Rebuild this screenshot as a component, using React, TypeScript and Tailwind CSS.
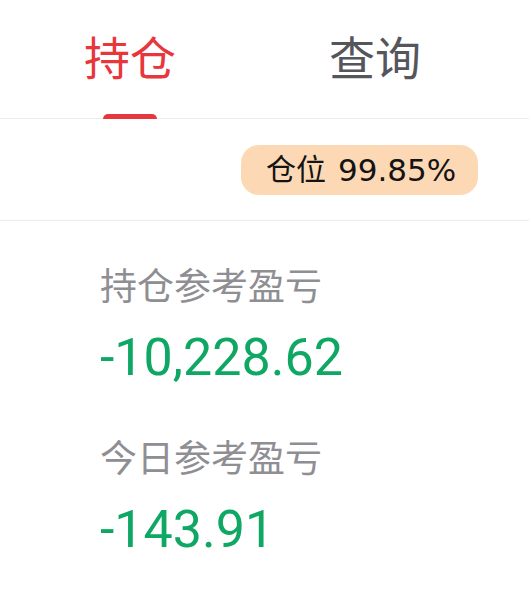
const font = { fontFamily: 'Roboto, "Noto Sans CJK SC", sans-serif' }

function Stat({ label, value }: { label: string; value: string }) {
  return (
    <div className="flex flex-col">
      <div className="text-[37px] leading-[37px] text-[#8e8e93]">{label}</div>
      <div className="mt-[26px] text-[52px] leading-[52px] text-[#0ea763]">{value}</div>
    </div>
  )
}

export default function App() {
  return (
    <div style={font} className="w-[529px] h-[614px] bg-white overflow-hidden">
      <div className="relative h-[119px] border-b border-[#ececec]">
        <div className="flex items-start pt-[33px]">
          <div className="ml-[84px] flex flex-col items-center">
            <span className="text-[46px] leading-[52px] text-[#e8373c]">持仓</span>
          </div>
          <div className="ml-[153px] flex flex-col items-center">
            <span className="text-[46px] leading-[52px] text-[#55555c]">查询</span>
          </div>
        </div>
        <div className="absolute left-[103px] bottom-[-1px] w-[54px] h-[5px] rounded-t-full bg-[#e8373c]" />
      </div>

      <div className="h-[102px] border-b border-[#ececec] flex items-center justify-end pr-[51px]">
        <div className="h-[50px] w-[237px] pl-[25px] rounded-[18px] bg-[#fcd9b4] flex items-center text-[#141414]">
          <span className="text-[30px] leading-[30px]">仓位</span>
          <span className="ml-[12px] text-[31px] leading-[30px] font-['DejaVu_Sans']">99.85%</span>
        </div>
      </div>

      <div className="pl-[100px] pt-[48px] flex flex-col gap-[57px]">
        <Stat label="持仓参考盈亏" value="-10,228.62" />
        <Stat label="今日参考盈亏" value="-143.91" />
      </div>
    </div>
  )
}
